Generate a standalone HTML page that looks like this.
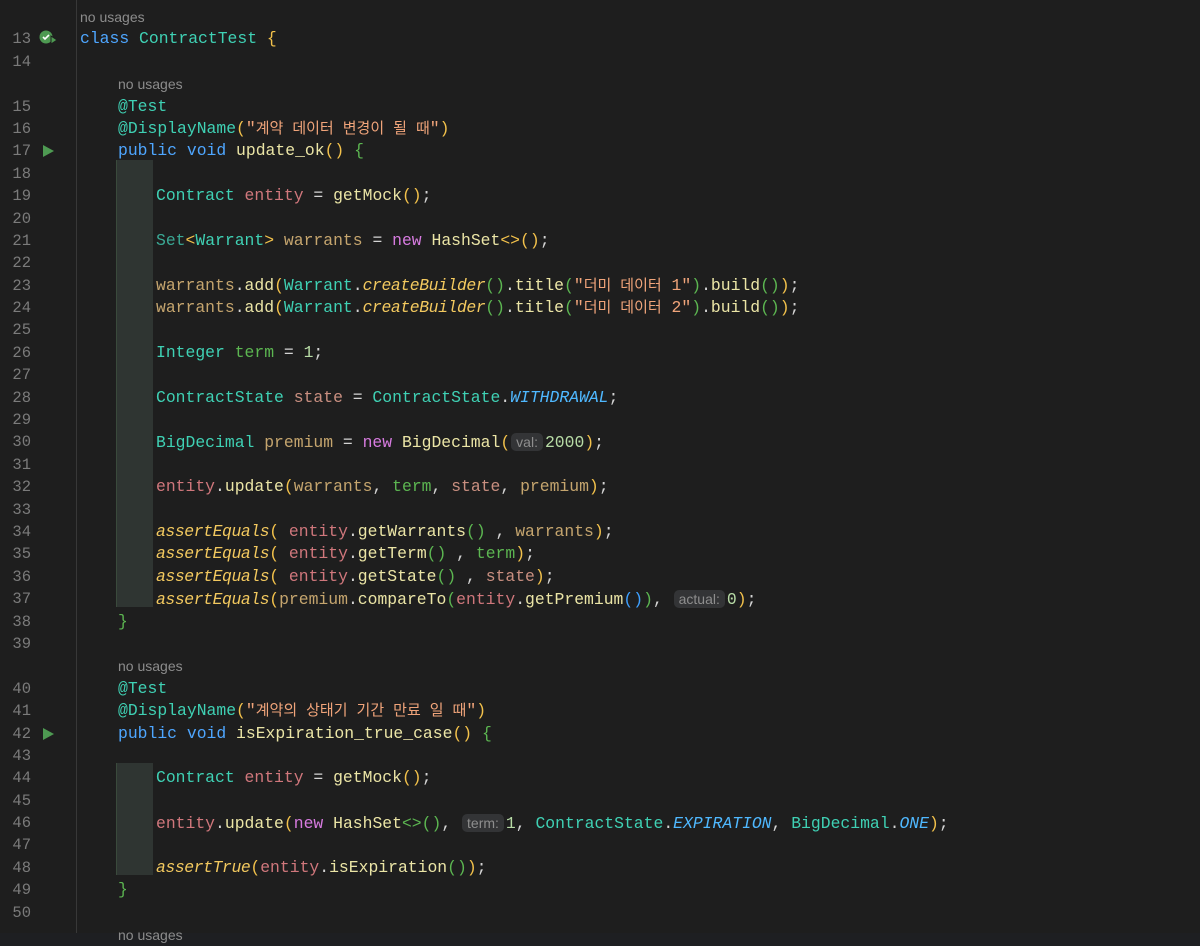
<!DOCTYPE html>
<html><head><meta charset="utf-8"><style>
html,body{margin:0;padding:0;background:#1e1f22;}
body{width:1200px;height:933px;overflow:hidden;position:relative;background:#1e1e1e;}
.gut{position:absolute;left:76px;top:0;width:1px;height:933px;background:#383838;}
.blk{position:absolute;left:116px;top:160px;width:37px;height:447px;background:#2f3532;}
.blk2{position:absolute;left:116px;top:763px;width:37px;height:112px;background:#2f3532;}
.vl{position:absolute;left:116px;width:1px;background:#3a4a3c;}
.code{position:absolute;left:0;top:6px;width:1200px;font-family:"Liberation Mono","Noto Sans CJK KR",monospace;font-size:16.4px;color:#d4d4d4;}
.r{height:22.4px;line-height:22.4px;position:relative;white-space:pre;}
.ln{position:absolute;left:0;width:31px;text-align:right;color:#7b7b7b;font-size:15.5px;}
.tx{position:absolute;left:80px;}
.i1{left:118px}.i2{left:156px}
.ko{font-size:15px;}
.nu{font-family:"Liberation Sans",sans-serif;font-size:14px;color:#8c8c8c;}
.k{color:#4ea6ff}.t{color:#3fd1b4}.t2{color:#3aa894}.m{color:#ebe5a6}.e{color:#d0777c}.v{color:#c5a56e}.g{color:#5cb651}.n{color:#d77be0}.st{color:#c98f80}
.s{color:#f0a47a}.p{color:#f2c14b}.p2{color:#5cb651}.p3{color:#3ea0ff}.c{color:#4fb8ff;font-style:italic}.a{color:#f3c95f;font-style:italic;letter-spacing:-0.4px}.num{color:#b8dca6}
.h{font-family:"Liberation Sans",sans-serif;font-size:14px;color:#8e8e8e;background:#333436;border-radius:5px;padding:1px 5px;margin:0 2px 0 1px;}
.run{position:absolute;left:43px;top:5px;width:0;height:0;border-top:6px solid transparent;border-bottom:6px solid transparent;border-left:11px solid #4e9a52;}
</style></head><body>
<div class="gut"></div>
<div class="blk"></div><div class="blk2"></div>
<div class="vl" style="top:160px;height:447px"></div>
<div class="vl" style="top:763px;height:112px"></div>
<div class="code">
<div class="r"><span class="tx nu">no usages</span></div>
<div class="r"><span class="ln">13</span><svg style="position:absolute;left:39px;top:2px" width="20" height="16"><circle cx="7" cy="7" r="6.5" fill="#4e9a52"/><path d="M4 7l2 2 4-4" stroke="#fff" stroke-width="1.6" fill="none"/><path d="M12 6l6 4-6 4z" fill="#4e9a52" stroke="#1e1e1e" stroke-width="1"/></svg><span class="tx"><span class="k">class</span> <span class="t">ContractTest</span> <span class="p">{</span></span></div>
<div class="r"><span class="ln">14</span></div>
<div class="r"><span class="tx i1 nu">no usages</span></div>
<div class="r"><span class="ln">15</span><span class="tx i1"><span class="t">@Test</span></span></div>
<div class="r"><span class="ln">16</span><span class="tx i1"><span class="t">@DisplayName</span><span class="p">(</span><span class="s">"<span class="ko">계약 데이터 변경이 될 때</span>"</span><span class="p">)</span></span></div>
<div class="r"><span class="ln">17</span><span class="run"></span><span class="tx i1"><span class="k">public void</span> <span class="m">update_ok</span><span class="p">()</span> <span class="p2">{</span></span></div>
<div class="r"><span class="ln">18</span></div>
<div class="r"><span class="ln">19</span><span class="tx i2"><span class="t">Contract</span> <span class="e">entity</span> = <span class="m">getMock</span><span class="p">()</span>;</span></div>
<div class="r"><span class="ln">20</span></div>
<div class="r"><span class="ln">21</span><span class="tx i2"><span class="t2">Set</span><span class="p">&lt;</span><span class="t">Warrant</span><span class="p">&gt;</span> <span class="v">warrants</span> = <span class="n">new</span> <span class="m">HashSet</span><span class="p">&lt;&gt;()</span>;</span></div>
<div class="r"><span class="ln">22</span></div>
<div class="r"><span class="ln">23</span><span class="tx i2"><span class="v">warrants</span>.<span class="m">add</span><span class="p">(</span><span class="t">Warrant</span>.<span class="a">createBuilder</span><span class="p2">()</span>.<span class="m">title</span><span class="p2">(</span><span class="s">"<span class="ko">더미 데이터</span> 1"</span><span class="p2">)</span>.<span class="m">build</span><span class="p2">()</span><span class="p">)</span>;</span></div>
<div class="r"><span class="ln">24</span><span class="tx i2"><span class="v">warrants</span>.<span class="m">add</span><span class="p">(</span><span class="t">Warrant</span>.<span class="a">createBuilder</span><span class="p2">()</span>.<span class="m">title</span><span class="p2">(</span><span class="s">"<span class="ko">더미 데이터</span> 2"</span><span class="p2">)</span>.<span class="m">build</span><span class="p2">()</span><span class="p">)</span>;</span></div>
<div class="r"><span class="ln">25</span></div>
<div class="r"><span class="ln">26</span><span class="tx i2"><span class="t">Integer</span> <span class="g">term</span> = <span class="num">1</span>;</span></div>
<div class="r"><span class="ln">27</span></div>
<div class="r"><span class="ln">28</span><span class="tx i2"><span class="t">ContractState</span> <span class="st">state</span> = <span class="t">ContractState</span>.<span class="c">WITHDRAWAL</span>;</span></div>
<div class="r"><span class="ln">29</span></div>
<div class="r"><span class="ln">30</span><span class="tx i2"><span class="t">BigDecimal</span> <span class="v">premium</span> = <span class="n">new</span> <span class="m">BigDecimal</span><span class="p">(</span><span class="h">val:</span><span class="num">2000</span><span class="p">)</span>;</span></div>
<div class="r"><span class="ln">31</span></div>
<div class="r"><span class="ln">32</span><span class="tx i2"><span class="e">entity</span>.<span class="m">update</span><span class="p">(</span><span class="v">warrants</span>, <span class="g">term</span>, <span class="st">state</span>, <span class="v">premium</span><span class="p">)</span>;</span></div>
<div class="r"><span class="ln">33</span></div>
<div class="r"><span class="ln">34</span><span class="tx i2"><span class="a">assertEquals</span><span class="p">(</span> <span class="e">entity</span>.<span class="m">getWarrants</span><span class="p2">()</span> , <span class="v">warrants</span><span class="p">)</span>;</span></div>
<div class="r"><span class="ln">35</span><span class="tx i2"><span class="a">assertEquals</span><span class="p">(</span> <span class="e">entity</span>.<span class="m">getTerm</span><span class="p2">()</span> , <span class="g">term</span><span class="p">)</span>;</span></div>
<div class="r"><span class="ln">36</span><span class="tx i2"><span class="a">assertEquals</span><span class="p">(</span> <span class="e">entity</span>.<span class="m">getState</span><span class="p2">()</span> , <span class="st">state</span><span class="p">)</span>;</span></div>
<div class="r"><span class="ln">37</span><span class="tx i2"><span class="a">assertEquals</span><span class="p">(</span><span class="v">premium</span>.<span class="m">compareTo</span><span class="p2">(</span><span class="e">entity</span>.<span class="m">getPremium</span><span class="p3">()</span><span class="p2">)</span>, <span class="h">actual:</span><span class="num">0</span><span class="p">)</span>;</span></div>
<div class="r"><span class="ln">38</span><span class="tx i1"><span class="p2">}</span></span></div>
<div class="r"><span class="ln">39</span></div>
<div class="r"><span class="tx i1 nu">no usages</span></div>
<div class="r"><span class="ln">40</span><span class="tx i1"><span class="t">@Test</span></span></div>
<div class="r"><span class="ln">41</span><span class="tx i1"><span class="t">@DisplayName</span><span class="p">(</span><span class="s">"<span class="ko">계약의 상태기 기간 만료 일 때</span>"</span><span class="p">)</span></span></div>
<div class="r"><span class="ln">42</span><span class="run"></span><span class="tx i1"><span class="k">public void</span> <span class="m">isExpiration_true_case</span><span class="p">()</span> <span class="p2">{</span></span></div>
<div class="r"><span class="ln">43</span></div>
<div class="r"><span class="ln">44</span><span class="tx i2"><span class="t">Contract</span> <span class="e">entity</span> = <span class="m">getMock</span><span class="p">()</span>;</span></div>
<div class="r"><span class="ln">45</span></div>
<div class="r"><span class="ln">46</span><span class="tx i2"><span class="e">entity</span>.<span class="m">update</span><span class="p">(</span><span class="n">new</span> <span class="m">HashSet</span><span class="p2">&lt;&gt;()</span>, <span class="h">term:</span><span class="num">1</span>, <span class="t">ContractState</span>.<span class="c">EXPIRATION</span>, <span class="t">BigDecimal</span>.<span class="c">ONE</span><span class="p">)</span>;</span></div>
<div class="r"><span class="ln">47</span></div>
<div class="r"><span class="ln">48</span><span class="tx i2"><span class="a">assertTrue</span><span class="p">(</span><span class="e">entity</span>.<span class="m">isExpiration</span><span class="p2">()</span><span class="p">)</span>;</span></div>
<div class="r"><span class="ln">49</span><span class="tx i1"><span class="p2">}</span></span></div>
<div class="r"><span class="ln">50</span></div>
<div class="r"><span class="tx i1 nu">no usages</span></div>
</div>
</body></html>
